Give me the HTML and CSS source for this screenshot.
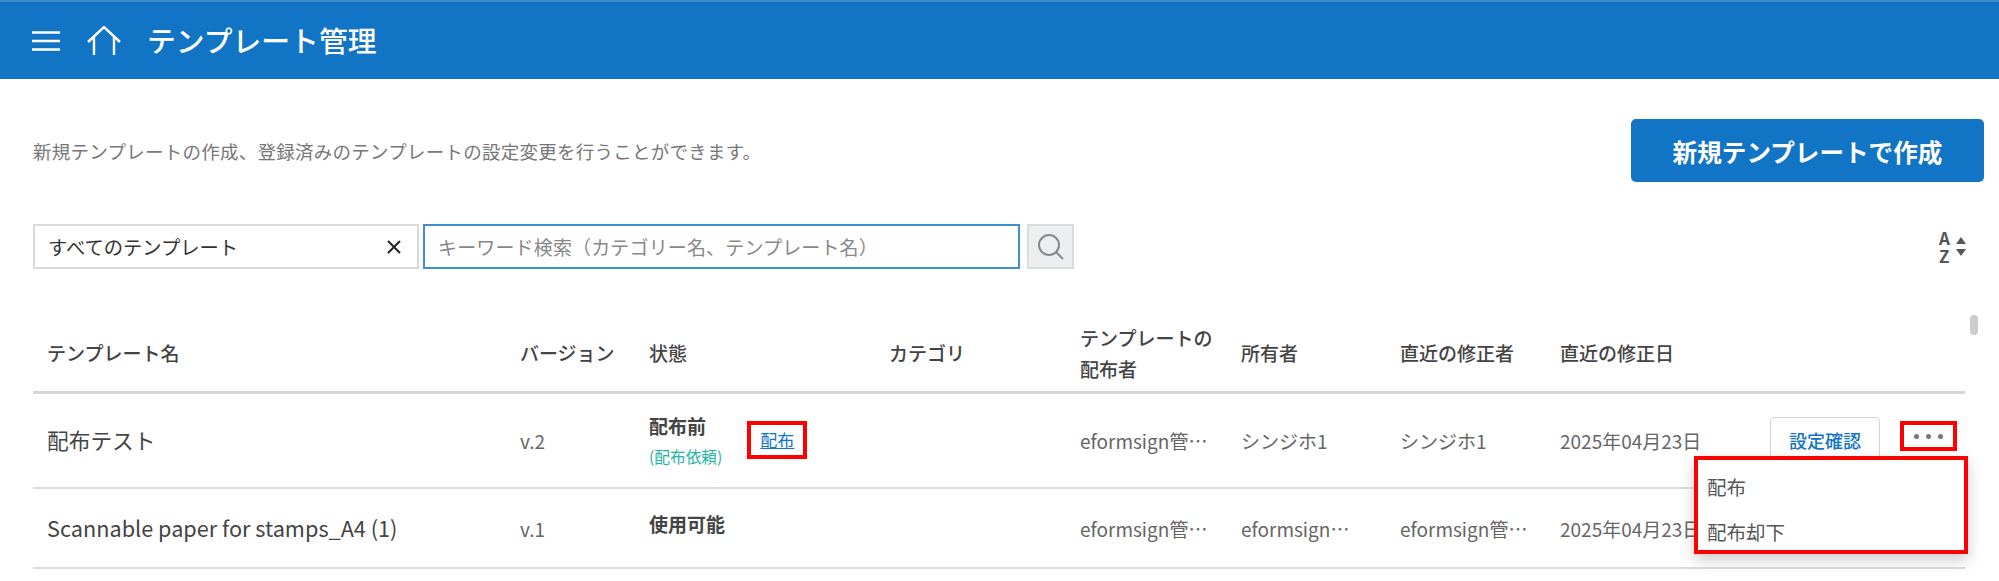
FILE: index.html
```html
<!DOCTYPE html>
<html lang="ja">
<head>
    <meta charset="UTF-8">
    <meta name="viewport" content="width=device-width, initial-scale=1.0">
    <title>テンプレート管理</title>
    <link rel="stylesheet" href="styles.css">
</head>
<body>
    <header class="topbar">
        <svg class="menu-icon" viewBox="0 0 28 20" width="28" height="20"><path d="M0 1.5h28M0 10h28M0 18.5h28" /></svg>
        <svg class="home-icon" viewBox="0 0 34 30" width="34" height="30"><path d="M1 16 17 1l16 15M7 11v18M27 11v18" /></svg>
        <h1 class="page-title">テンプレート管理</h1>
    </header>

    <main class="content">
        <div class="intro">
            <p class="intro-text">新規テンプレートの作成、登録済みのテンプレートの設定変更を行うことができます。</p>
            <button class="btn-create">新規テンプレートで作成</button>
        </div>

        <div class="filters">
            <div class="select-box">
                <span>すべてのテンプレート</span>
                <svg viewBox="0 0 14 14" width="14" height="14"><path d="M1 1l12 12M13 1 1 13" /></svg>
            </div>
            <div class="search-box">キーワード検索（カテゴリー名、テンプレート名）</div>
            <button class="search-btn">
                <svg viewBox="0 0 26 26" width="26" height="26"><circle cx="11" cy="11" r="10" /><path d="M18 18l7 7" /></svg>
            </button>
            <div class="sort-icon">
                <span class="sort-letters">A<br>Z</span>
                <span class="sort-arrows">
                    <svg viewBox="0 0 10 7" width="10" height="7"><path d="M5 0l5 7H0z" /></svg>
                    <svg viewBox="0 0 10 7" width="10" height="7"><path d="M5 7 0 0h10z" /></svg>
                </span>
            </div>
        </div>

        <div class="table-wrap">
            <table class="template-table">
                <colgroup>
                    <col class="col-name"><col class="col-version"><col class="col-state"><col class="col-category">
                    <col class="col-dist"><col class="col-owner"><col class="col-editor"><col class="col-date"><col class="col-action">
                </colgroup>
                <thead>
                    <tr>
                        <th>テンプレート名</th>
                        <th>バージョン</th>
                        <th>状態</th>
                        <th>カテゴリ</th>
                        <th>テンプレートの<br>配布者</th>
                        <th>所有者</th>
                        <th>直近の修正者</th>
                        <th>直近の修正日</th>
                        <th></th>
                    </tr>
                </thead>
                <tbody>
                    <tr class="row-first">
                        <td class="name">配布テスト</td>
                        <td>v.2</td>
                        <td>
                            <div class="state-cell">
                                <div>
                                    <div class="state">配布前</div>
                                    <div class="state-sub">(配布依頼)</div>
                                </div>
                                <a href="#" class="mark deploy-link">配布</a>
                            </div>
                        </td>
                        <td></td>
                        <td class="cut">eformsign管理者</td>
                        <td class="cut">シンジホ1</td>
                        <td class="cut">シンジホ1</td>
                        <td>2025年04月23日</td>
                        <td>
                            <div class="actions">
                                <button class="btn-settings">設定確認</button>
                                <button class="mark btn-more"><i></i><i></i><i></i></button>
                            </div>
                        </td>
                    </tr>
                    <tr>
                        <td class="name">Scannable paper for stamps_A4 (1)</td>
                        <td>v.1</td>
                        <td><div class="state state-only">使用可能</div></td>
                        <td></td>
                        <td class="cut">eformsign管理者</td>
                        <td class="cut">eformsign管理者</td>
                        <td class="cut">eformsign管理者</td>
                        <td>2025年04月23日</td>
                        <td></td>
                    </tr>
                </tbody>
            </table>
            <ul class="mark more-menu">
                <li>配布</li>
                <li>配布却下</li>
            </ul>
            <div class="scroll-thumb"></div>
        </div>
    </main>
</body>
</html>
```

FILE: styles.css
```css
* {
    box-sizing: border-box;
}

html, body {
    height: 581px;
    overflow: hidden;
}

body {
    margin: 0;
    background-color: #fff;
    color: #444;
    font-family: "Noto Sans CJK JP", "Noto Sans", sans-serif;
}

button {
    font-family: inherit;
    cursor: pointer;
}

/* Top bar */
.topbar {
    display: flex;
    align-items: center;
    height: 79px;
    padding-left: 32px;
    background-color: #1174c5;
    border-top: 2px solid #3d8cd0;
    color: #fff;
}

.menu-icon path,
.home-icon path {
    fill: none;
    stroke: #fff;
    stroke-width: 2.4;
}

.home-icon {
    margin-left: 27px;
}

.page-title {
    margin: 0 0 0 26px;
    font-size: 28.8px;
    font-weight: 500;
    line-height: 1;
}

/* Intro row */
.content {
    padding: 40px 15px 0 33px;
}

.intro {
    display: flex;
    align-items: center;
    justify-content: space-between;
    height: 63px;
}

.intro-text {
    margin: 0;
    font-size: 18.5px;
    letter-spacing: 0.25px;
    color: #777;
}

.btn-create {
    width: 353px;
    height: 63px;
    background-color: #1174c5;
    color: #fff;
    border: none;
    border-radius: 5px;
    font-size: 24.6px;
    font-weight: 700;
}

/* Filters */
.filters {
    display: flex;
    align-items: center;
    height: 45px;
    margin-top: 42px;
}

.select-box {
    display: flex;
    align-items: center;
    justify-content: space-between;
    width: 386px;
    height: 45px;
    padding: 0 16px 0 13px;
    border: 2px solid #dadada;
    font-size: 19.3px;
    color: #333;
}

.select-box svg path {
    fill: none;
    stroke: #222;
    stroke-width: 2;
}

.search-box {
    display: flex;
    align-items: center;
    width: 597px;
    height: 45px;
    margin-left: 4px;
    padding-left: 13px;
    border: 2px solid #3d8fd1;
    font-size: 19px;
    letter-spacing: 0.15px;
    color: #888;
}

.search-btn {
    display: flex;
    align-items: center;
    justify-content: center;
    width: 47px;
    height: 45px;
    margin-left: 7px;
    padding: 0;
    background-color: #eceef0;
    border: 2px solid #dcdcdc;
}

.search-btn svg * {
    fill: none;
    stroke: #888;
    stroke-width: 2;
}

.sort-icon {
    display: flex;
    align-items: center;
    gap: 6px;
    margin-left: auto;
    margin-right: 18px;
    color: #555;
}

.sort-letters {
    font-size: 17px;
    font-weight: 700;
    line-height: 18px;
}

.sort-arrows {
    display: flex;
    flex-direction: column;
    gap: 5px;
}

.sort-arrows svg {
    display: block;
    fill: #555;
}

/* Table */
.table-wrap {
    position: relative;
    width: 1932px;
    margin-top: 46px;
}

.template-table {
    width: 1932px;
    table-layout: fixed;
    border-collapse: collapse;
    font-size: 19px;
}

.col-name { width: 487px; }
.col-version { width: 129px; }
.col-state { width: 240px; }
.col-category { width: 191px; }
.col-dist { width: 161px; }
.col-owner { width: 159px; }
.col-editor { width: 160px; }
.col-date { width: 210px; }
.col-action { width: 195px; }

.template-table th {
    height: 77px;
    padding: 0;
    border-bottom: 3px solid #d6d6d6;
    font-weight: 500;
    line-height: 31px;
    text-align: left;
    color: #444;
}

.template-table th:first-child,
.template-table td:first-child {
    padding-left: 14px;
}

.template-table td {
    height: 80px;
    padding: 0;
    border-bottom: 2px solid #dcdcdc;
    color: #666;
    white-space: nowrap;
}

.template-table .row-first td {
    height: 96px;
}

.template-table td.name {
    padding-bottom: 2px;
    font-size: 21.7px;
    color: #444;
}

.template-table td.cut {
    padding-right: 32px;
    overflow: hidden;
    text-overflow: ellipsis;
}

.state-cell {
    display: flex;
    align-items: center;
    gap: 25px;
}

.state {
    font-weight: 700;
    line-height: 26px;
    color: #444;
}

.state-only {
    margin-bottom: 8px;
}

.state-sub {
    margin-top: 8px;
    font-size: 15.7px;
    line-height: 20px;
    color: #25b5a1;
}

.mark {
    border: 4px solid #f00;
}

.deploy-link {
    padding: 0 9px;
    height: 38px;
    line-height: 29px;
    font-size: 17px;
    color: #1174c5;
}

.actions {
    display: flex;
    align-items: center;
    gap: 20px;
    height: 46px;
}

.btn-settings {
    width: 110px;
    height: 46px;
    padding: 0;
    background-color: #fff;
    border: 1px solid #d4d4d4;
    border-radius: 4px;
    font-size: 18px;
    font-weight: 500;
    color: #1174c5;
}

.btn-more {
    display: flex;
    align-items: center;
    justify-content: center;
    gap: 7px;
    width: 57px;
    height: 30px;
    margin-top: -8px;
    padding: 0;
    background-color: #fff;
}

.btn-more i {
    width: 5px;
    height: 5px;
    background-color: #777;
    border-radius: 50%;
}

.more-menu {
    position: absolute;
    top: 141px;
    left: 1661px;
    width: 274px;
    height: 98px;
    margin: 0;
    padding: 6px 9px 0;
    list-style: none;
    background-color: #fff;
    box-shadow: 0 6px 14px rgba(0, 0, 0, 0.2);
    font-size: 19.5px;
    color: #555;
}

.more-menu li {
    height: 45px;
    line-height: 41px;
}

.scroll-thumb {
    position: absolute;
    top: 0;
    left: 1937px;
    width: 8px;
    height: 20px;
    background-color: #ccc;
    border-radius: 4px;
}
```
